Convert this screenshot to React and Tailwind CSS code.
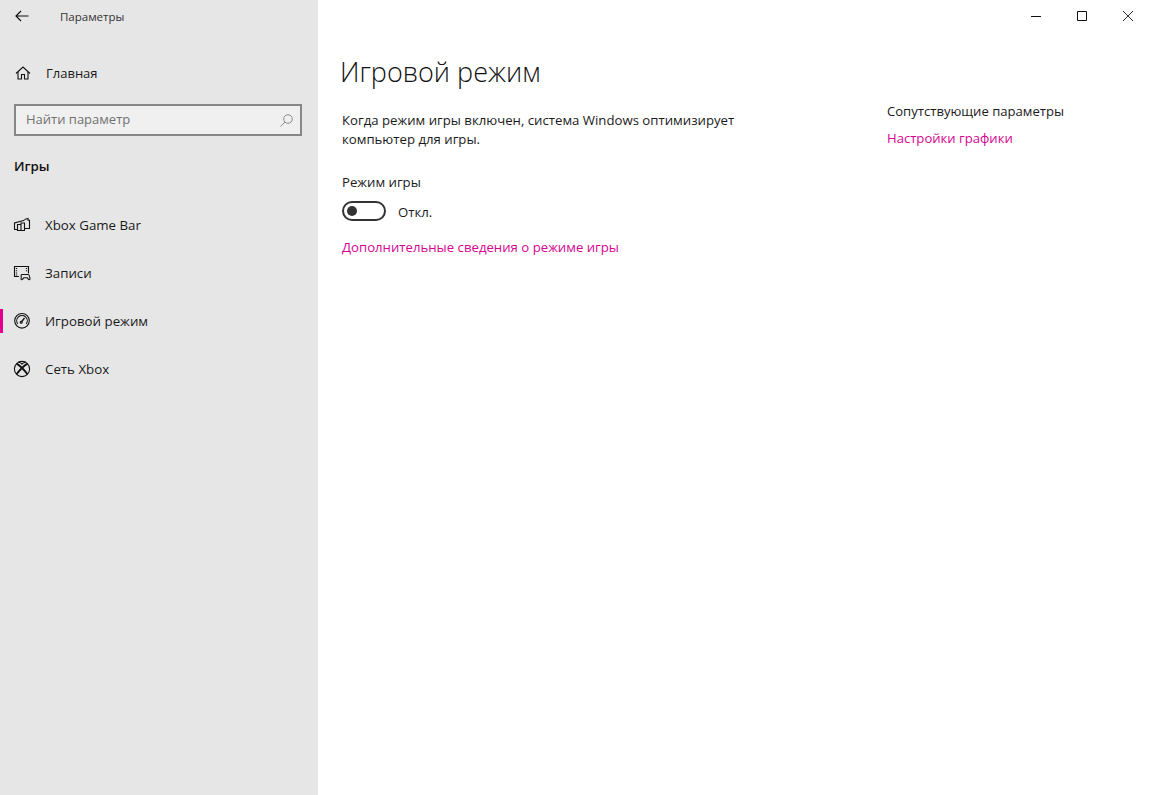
import React from "react";

const font = "font-['Open_Sans','Noto_Sans',sans-serif]";

function BackIcon() {
  return (
    <svg width="14" height="12" viewBox="0 0 14 12" fill="none" stroke="currentColor" strokeWidth="1.2">
      <path d="M13.500 6H1M6 1 1 6l5 5" />
    </svg>
  );
}

function HomeIcon() {
  return (
    <svg width="16" height="16" viewBox="0 0 16 16" fill="none" stroke="currentColor" strokeWidth="1.1">
      <path d="M1 8.500 8 2l7 6.500" />
      <path d="M3 7v7h3.500V9.500h3V14H13V7" />
    </svg>
  );
}

function SearchIcon() {
  return (
    <svg width="13" height="13" viewBox="0 0 13 13" fill="none" stroke="currentColor" strokeWidth="1">
      <circle cx="8" cy="5" r="4.300" />
      <path d="M5 8 .5 12.500" />
    </svg>
  );
}

function GameBarIcon() {
  return (
    <svg width="18" height="18" viewBox="0 0 18 18" fill="none" stroke="currentColor" strokeWidth="1.1">
      <path d="M4.500 13.500H1.500V7L11.500 4.200" />
      <path d="M4.500 8.500H8v6H4.500zM8 7h3.500v7.500H8zM11.500 3.500 15 2.500v1.800h1.500v8.200h-5" />
    </svg>
  );
}

function CapturesIcon() {
  return (
    <svg width="18" height="18" viewBox="0 0 18 18" fill="none" stroke="currentColor" strokeWidth="1.1">
      <path d="M6 12.500H1.500v-10h14v7" />
      <path d="M3.500 4v7.500M13.500 4v4" strokeWidth="1.300" strokeDasharray="1 1.200" />
      <path d="M9 10.500h6c1 0 1.500 1 1.700 2.500l.3 2c0 .8-1 1-1.500.3l-1.200-1.500h-3.600l-1.200 1.500c-.5.7-1.500.5-1.500-.3l.3-2C8 11.500 8 10.500 9 10.500z" />
    </svg>
  );
}

function GameModeIcon() {
  return (
    <svg width="18" height="18" viewBox="0 0 18 18" fill="none" stroke="currentColor" strokeWidth="1.1">
      <circle cx="9" cy="8.800" r="7.300" />
      <path d="M4.700 12A5.300 5.300 0 1 1 13.300 12" />
      <path d="M8.400 10 11.500 6" strokeWidth="1.300" />
      <circle cx="8.200" cy="10.200" r="1" />
    </svg>
  );
}

function XboxIcon() {
  return (
    <svg width="18" height="18" viewBox="0 0 18 18" fill="none" stroke="currentColor" strokeWidth="1.1">
      <circle cx="9" cy="9" r="7.600" />
      <path d="M3.600 3.800C6 4.500 11.500 10 14.500 14.300M14.400 3.800C12 4.500 6.500 10 3.500 14.300" strokeWidth="1.900" />
      <path d="M5.500 2.300C7.500 2.600 8.500 3.500 9 4c.5-.5 1.500-1.400 3.500-1.700" />
    </svg>
  );
}

function NavItem({ icon, label, active }) {
  return (
    <div className="relative flex h-12 items-center pl-[13px]">
      {active && <div className="absolute left-0 top-[12px] h-6 w-[3px] bg-[#e3008c]" />}
      <div className="flex w-[32px] items-center text-[#111111]">{icon}</div>
      <span className="pt-[2px] text-[13.300px] text-[#1a1a1a]">{label}</span>
    </div>
  );
}

export default function App() {
  return (
    <div className={`flex h-[795px] w-[1149px] overflow-hidden bg-white ${font}`}>
      <aside className="flex w-[318px] shrink-0 flex-col bg-[#e6e6e6]">
        <div className="flex h-8 items-center pl-[15px]">
          <span className="text-[#111111]"><BackIcon /></span>
          <span className="ml-[31px] pt-[2px] text-[11.500px] text-[#333333]">Параметры</span>
        </div>
        <div className="mt-[17px] flex h-12 items-center pl-[15px] text-[#111111]">
          <HomeIcon />
          <span className="ml-[15px] pt-[2px] text-[13px] text-[#1a1a1a]">Главная</span>
        </div>
        <div className="ml-[14px] mt-[7px] flex h-8 w-[288px] items-center justify-between border-2 border-[#878787] bg-[#f0f0f0] pl-[10px] pr-[7px]">
          <span className="text-[13px] text-[#707070]">Найти параметр</span>
          <span className="text-[#8a8a8a]"><SearchIcon /></span>
        </div>
        <div className="mt-[16px] pl-[14px] text-[13.300px] font-semibold leading-[28px] text-[#111111]">Игры</div>
        <nav className="mt-[21px] flex flex-col">
          <NavItem icon={<GameBarIcon />} label="Xbox Game Bar" />
          <NavItem icon={<CapturesIcon />} label="Записи" />
          <NavItem icon={<GameModeIcon />} label="Игровой режим" active />
          <NavItem icon={<XboxIcon />} label="Сеть Xbox" />
        </nav>
      </aside>

      <main className="flex min-w-0 flex-1 flex-col">
        <div className="flex h-8 items-center justify-end gap-[36px] pr-[16px] text-[#111111]">
          <svg width="10" height="10" viewBox="0 0 10 10" fill="none" stroke="currentColor"><path d="M0 5.500h10" /></svg>
          <svg width="10" height="10" viewBox="0 0 10 10" fill="none" stroke="currentColor"><path d="M.5.500h9v9h-9z" /></svg>
          <svg width="10" height="10" viewBox="0 0 10 10" fill="none" stroke="currentColor" strokeWidth="0.9"><path d="M0 0l10 10M10 0 0 10" /></svg>
        </div>
        <div className="flex pl-[22px] pt-[20px]">
          <section className="w-[547px]">
            <h1 className="text-[27px] font-light leading-[40px] text-[#111111]">Игровой режим</h1>
            <p className="ml-[2px] mt-[18.500px] w-[420px] text-[13.200px] leading-[19px] text-[#1a1a1a]">
              Когда режим игры включен, система Windows оптимизирует компьютер для игры.
            </p>
            <div className="ml-[2px] mt-[23.500px] text-[13.200px] leading-[20px] text-[#1a1a1a]">Режим игры</div>
            <div className="ml-[2px] mt-[9px] flex h-5 items-center">
              <div className="flex h-5 w-11 items-center rounded-full border-2 border-[#333333] pl-[3px]">
                <div className="h-[10px] w-[10px] rounded-full bg-[#333333]" />
              </div>
              <span className="ml-3 pt-[3px] text-[13.200px] text-[#1a1a1a]">Откл.</span>
            </div>
            <div className="ml-[2px] mt-[16px] text-[13.200px] leading-[20px] text-[#d6048f]">
              Дополнительные сведения о режиме игры
            </div>
          </section>
          <section className="mt-[49px]">
            <div className="text-[13.100px] leading-[20px] text-[#1a1a1a]">Сопутствующие параметры</div>
            <div className="mt-[7px] text-[13.100px] leading-[20px] text-[#d6048f]">Настройки графики</div>
          </section>
        </div>
      </main>
    </div>
  );
}
